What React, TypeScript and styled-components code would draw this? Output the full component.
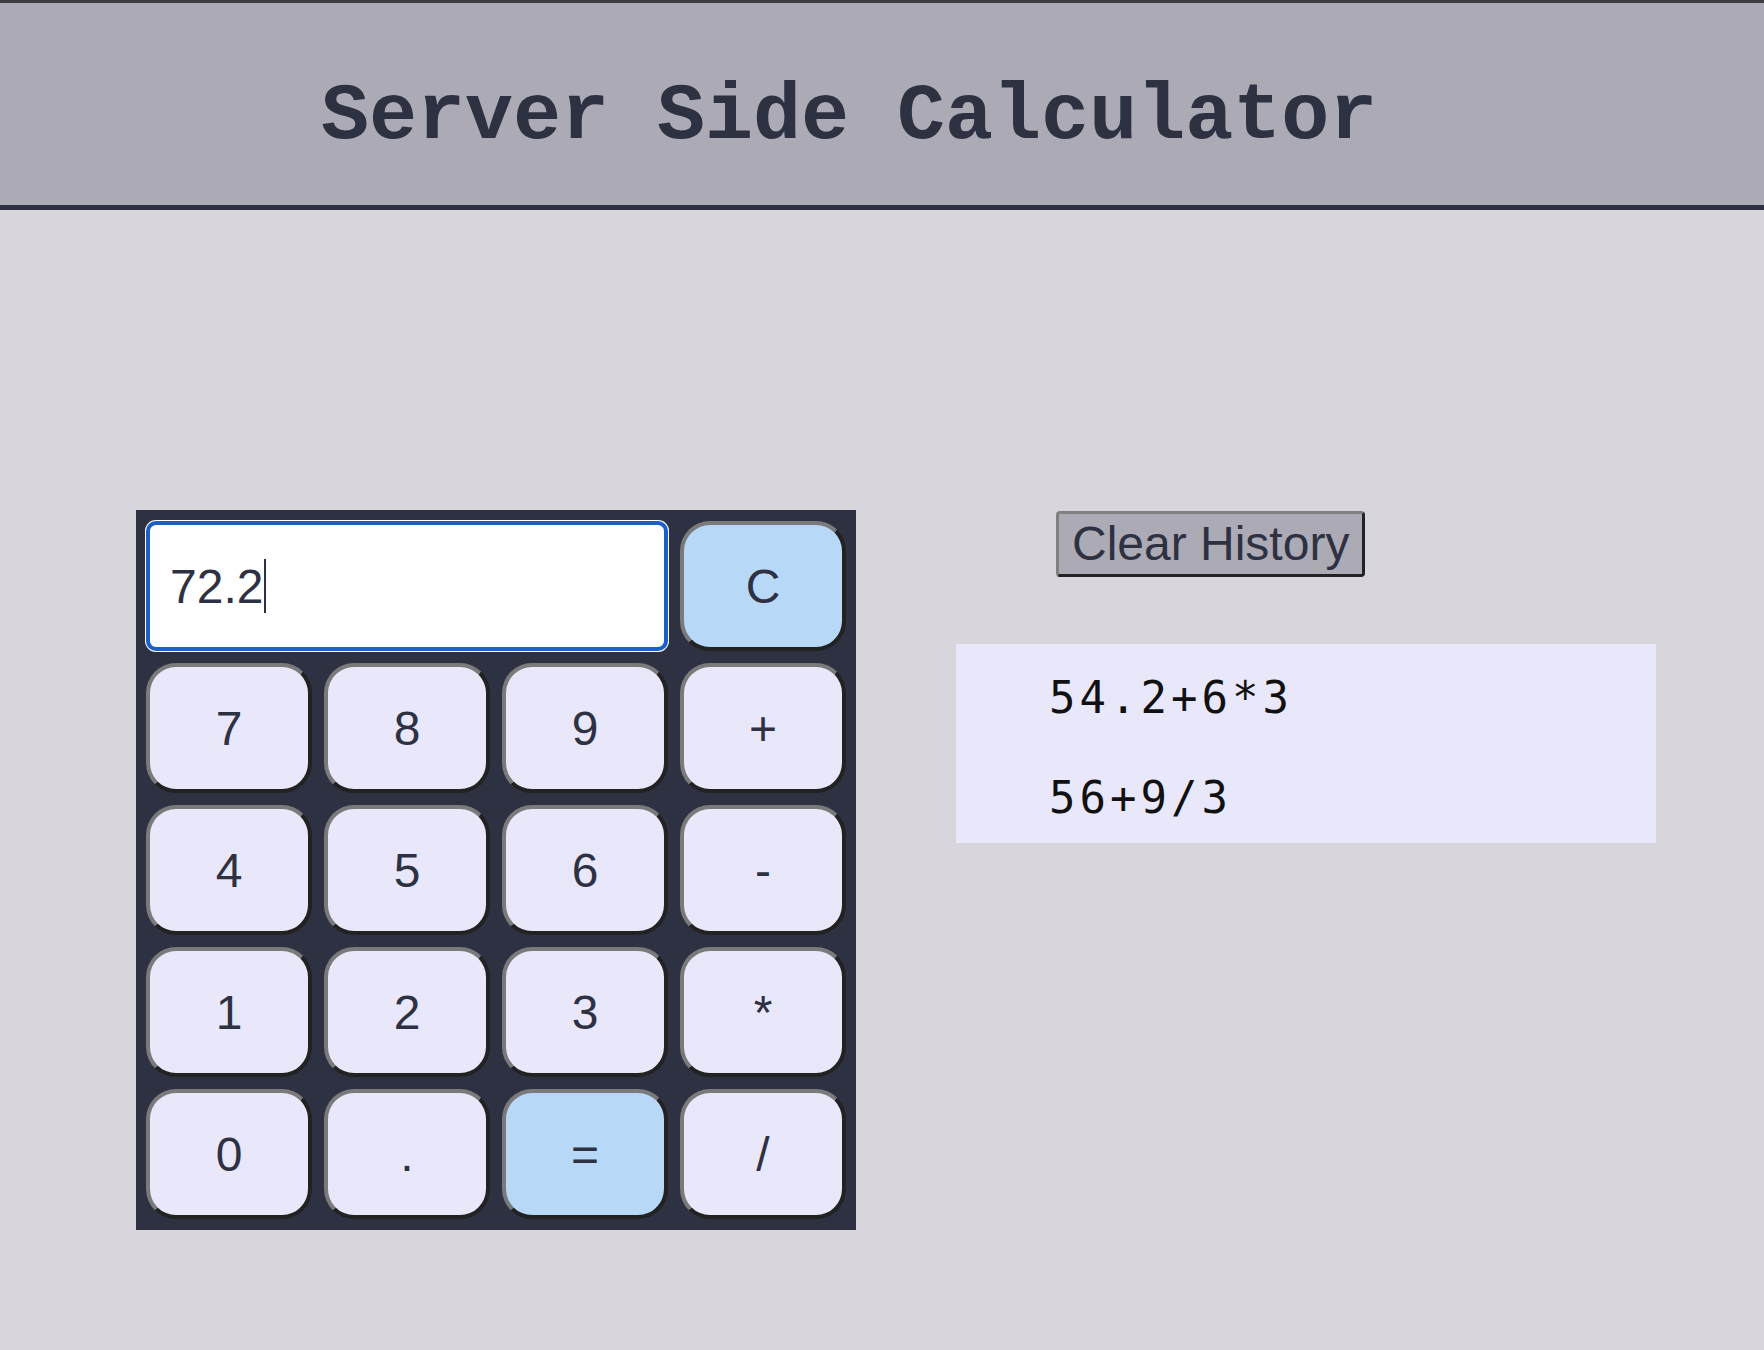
import React from "react";
import styled, { createGlobalStyle } from "styled-components";

const GlobalStyle = createGlobalStyle`
  html, body {
    margin: 0;
    padding: 0;
    background: #d8d6dc;
  }
  body {
    font-family: "Liberation Sans", Arial, sans-serif;
  }
  * { box-sizing: border-box; }
`;

const Page = styled.div`
  min-height: 100vh;
  background: #d8d6dc;
`;

const Header = styled.header`
  height: 210px;
  display: flex;
  align-items: center;
  padding: 26px 0 0 321px;
  background: #acabb5;
  border-top: 3px solid #3f3f43;
  border-bottom: 5px solid #2e3142;
`;

const Title = styled.h1`
  margin: 0;
  font-family: "Courier New", Courier, "Nimbus Mono PS", "Liberation Mono", monospace;
  font-weight: bold;
  font-size: 80px;
  line-height: 1;
  color: #2e3142;
`;

const Main = styled.main`
  display: flex;
  align-items: flex-start;
  gap: 100px;
  padding: 300px 0 0 136px;
`;

const Calculator = styled.div`
  display: grid;
  grid-template-columns: repeat(4, 166px);
  grid-auto-rows: 130px;
  gap: 12px;
  padding: 11px 10px;
  background: #2e3142;
`;

const Display = styled.div`
  grid-column: span 3;
  display: flex;
  align-items: center;
  padding-left: 20px;
  background: #ffffff;
  border: 4px solid #1b5fc9;
  border-radius: 10px;
  box-shadow: 0 0 0 1px #ffffff;
  font-family: "Liberation Sans", Arial, sans-serif;
  font-size: 48px;
  color: #2e3142;
`;

const Caret = styled.span`
  display: inline-block;
  width: 2px;
  height: 54px;
  margin-left: 1px;
  background: #2e3142;
`;

const Key = styled.button<{ $accent?: boolean }>`
  display: flex;
  align-items: center;
  justify-content: center;
  padding: 0;
  margin: 0;
  background: ${(p) => (p.$accent ? "#b8d8f8" : "#e9e8fb")};
  border: 4px solid;
  border-color: #7a7a7a #222222 #222222 #7a7a7a;
  border-radius: 30px;
  font-family: "Liberation Sans", Arial, sans-serif;
  font-size: 48px;
  color: #2e3142;
  cursor: pointer;
`;

const Side = styled.section`
  display: flex;
  flex-direction: column;
  align-items: flex-start;
  width: 700px;
  padding-top: 1px;
`;

const ClearButton = styled.button`
  height: 66px;
  margin-left: 100px;
  padding: 0 13px;
  background: #acabb5;
  border: 3px solid;
  border-color: #808080 #222222 #222222 #808080;
  border-radius: 4px;
  font-family: "Liberation Sans", Arial, sans-serif;
  font-size: 48px;
  line-height: 1;
  color: #2e3142;
  cursor: pointer;
`;

const History = styled.ul`
  list-style: none;
  width: 700px;
  height: 199px;
  margin: 67px 0 0;
  padding: 4px 0 0 93px;
  background: #e9e8fb;
`;

const Entry = styled.li`
  height: 100px;
  line-height: 100px;
  font-family: "DejaVu Sans Mono", "Liberation Mono", monospace;
  font-size: 44px;
  letter-spacing: 4px;
  color: #111111;
`;

const rows = [
  ["7", "8", "9", "+"],
  ["4", "5", "6", "-"],
  ["1", "2", "3", "*"],
  ["0", ".", "=", "/"],
];

const history = ["54.2+6*3", "56+9/3"];

export default function App() {
  return (
    <Page>
      <GlobalStyle />
      <Header>
        <Title>Server Side Calculator</Title>
      </Header>
      <Main>
        <Calculator>
          <Display>
            72.2
            <Caret />
          </Display>
          <Key $accent>C</Key>
          {rows.flat().map((k) => (
            <Key key={k} $accent={k === "="}>
              {k}
            </Key>
          ))}
        </Calculator>
        <Side>
          <ClearButton>Clear History</ClearButton>
          <History>
            {history.map((h) => (
              <Entry key={h}>{h}</Entry>
            ))}
          </History>
        </Side>
      </Main>
    </Page>
  );
}
